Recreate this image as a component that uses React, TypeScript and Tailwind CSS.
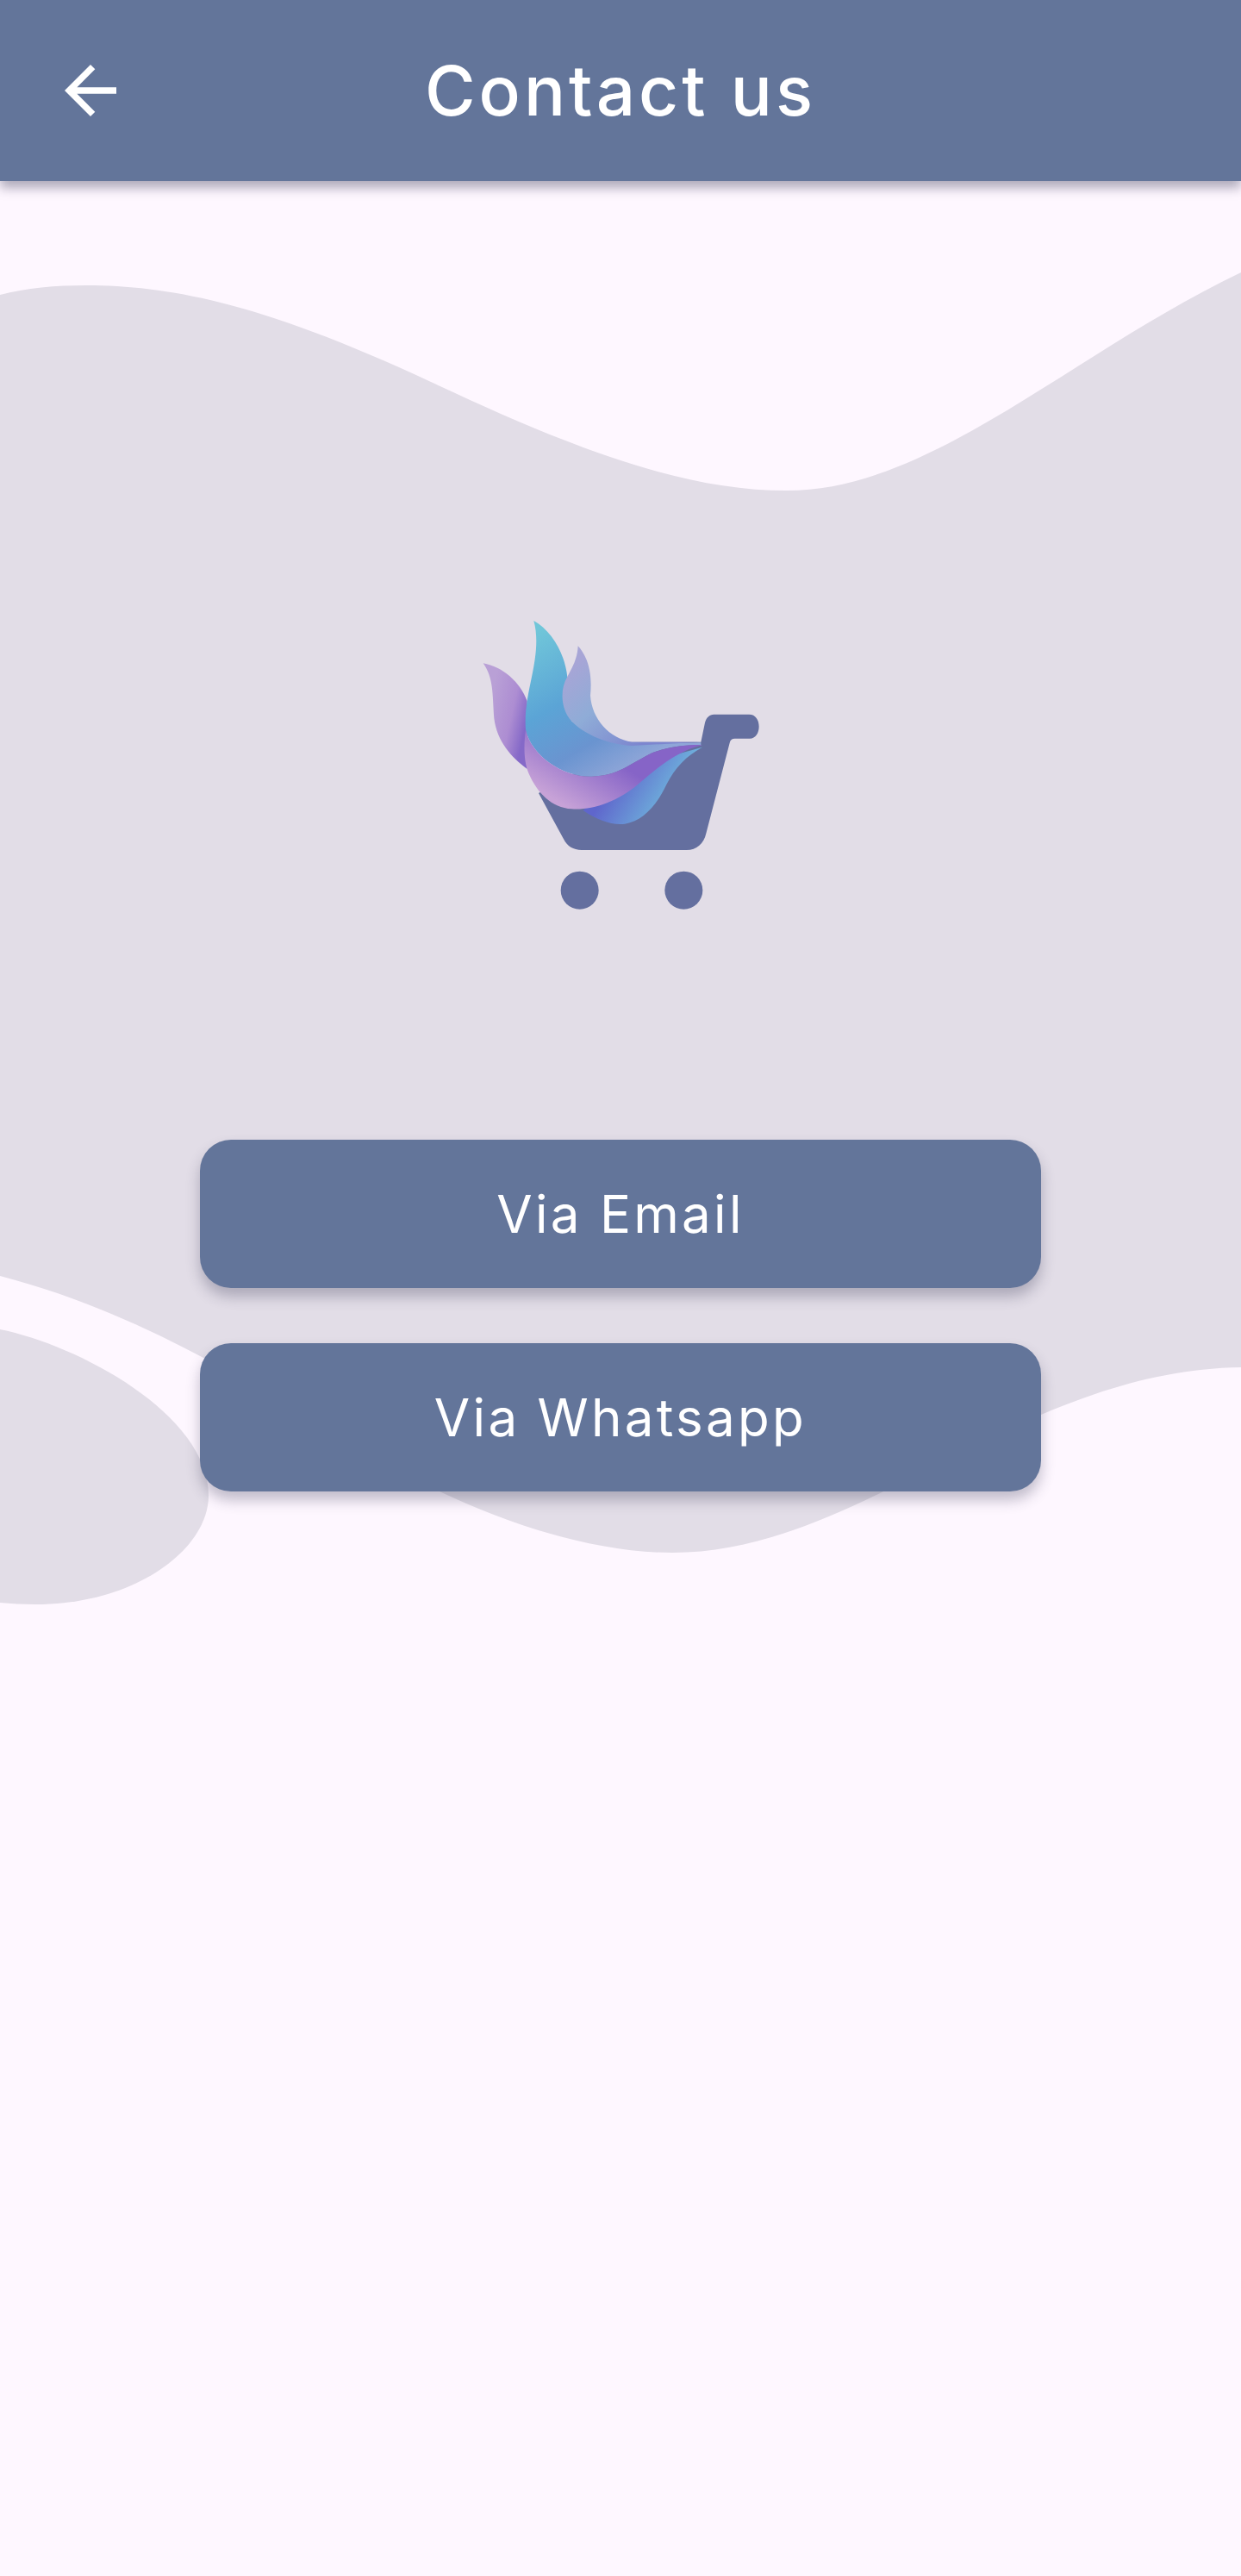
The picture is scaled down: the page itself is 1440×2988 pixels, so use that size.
function Waves() {
  return (
    <svg
      className="absolute left-0 top-0 h-[2988px] w-[1440px]"
      viewBox="0 0 1440 2988"
      fill="#e2dde7"
    >
      <path d="M0 342 C30 334 65 331 100 331 C200 331 310 354 500 443 C660 518 790 569 913 569 C1080 569 1240 412 1440 316 L1440 1586 C1180 1590 1000 1801 780 1801 C690 1801 590 1768 510 1730 C430 1692 320 1620 240 1577 C165 1537 85 1502 0 1480 Z" />
      <path d="M0 1542 C90 1560 242 1640 242 1735 C242 1795 160 1861 41 1861 C27 1861 13 1860 0 1859 Z" />
    </svg>
  );
}

function Logo() {
  return (
    <svg className="h-[380px] w-[380px]" viewBox="0 0 1140 1140">
      <defs>
        <linearGradient id="petal" gradientUnits="userSpaceOnUse" x1="110" y1="400" x2="245" y2="430">
          <stop offset="0" stopColor="#b9a0d6" />
          <stop offset="0.6" stopColor="#ad8dd2" />
          <stop offset="1" stopColor="#8569c8" />
        </linearGradient>
        <linearGradient id="main" gradientUnits="userSpaceOnUse" x1="270" y1="130" x2="560" y2="630">
          <stop offset="0" stopColor="#70c6d9" />
          <stop offset="0.45" stopColor="#5ba4d6" />
          <stop offset="0.75" stopColor="#6a94d0" />
          <stop offset="1" stopColor="#8fa6d8" />
        </linearGradient>
        <linearGradient id="back" gradientUnits="userSpaceOnUse" x1="400" y1="250" x2="640" y2="520">
          <stop offset="0" stopColor="#a7a5d6" />
          <stop offset="0.45" stopColor="#8facd7" />
          <stop offset="1" stopColor="#7c86cf" />
        </linearGradient>
        <linearGradient id="purple" gradientUnits="userSpaceOnUse" x1="400" y1="750" x2="520" y2="560">
          <stop offset="0" stopColor="#c7a2d7" />
          <stop offset="1" stopColor="#8664c7" />
        </linearGradient>
        <linearGradient id="low" gradientUnits="userSpaceOnUse" x1="520" y1="690" x2="680" y2="790">
          <stop offset="0" stopColor="#5f66cc" />
          <stop offset="1" stopColor="#6eaedb" />
        </linearGradient>
      </defs>
      <path
        fill="#646f9f"
        d="M285 690 L372 850 C385 875 405 888 435 888 L800 888 C835 888 860 865 868 830 L950 515 C952 505 958 500 968 500 L1020 500 C1040 500 1052 480 1052 458 C1052 435 1040 416 1018 416 L895 416 C880 416 868 428 864 445 L850 512 L600 512 Z"
      />
      <circle cx="428" cy="1028" r="66" fill="#646f9f" />
      <circle cx="790" cy="1028" r="66" fill="#646f9f" />
      <path
        fill="url(#petal)"
        d="M92 238 C160 250 222 305 245 370 L245 606 C190 565 140 510 130 430 C124 340 128 290 92 238 Z"
      />
      <path
        fill="url(#low)"
        d="M440 750 C490 785 540 802 585 797 C650 788 700 725 730 660 C760 600 800 560 855 530 L600 600 Z"
      />
      <path
        fill="url(#main)"
        d="M268 90 C330 125 375 200 385 285 L400 440 L610 518 L850 514 L850 525 C800 520 730 530 680 550 C600 590 560 630 470 632 C370 635 260 560 240 470 C235 400 250 340 260 290 C275 220 285 150 268 90 Z"
      />
      <path
        fill="url(#back)"
        d="M422 178 C460 220 472 280 465 350 C470 430 530 500 610 512 L850 512 L610 525 C530 520 450 490 400 440 C362 400 358 330 385 285 C400 255 420 225 422 178 Z"
      />
      <path
        fill="url(#purple)"
        d="M240 470 C260 560 370 635 470 632 C560 630 600 590 680 550 C730 530 800 520 855 522 C760 545 690 610 630 660 C560 720 470 750 400 745 C330 740 280 690 250 620 C230 570 235 510 240 470 Z"
      />
    </svg>
  );
}

function ContactButton({ label }: { label: string }) {
  return (
    <button
      type="button"
      className="flex h-[172px] w-[976px] items-center justify-center rounded-[36px] bg-[#63759a] text-[60px] tracking-[3.3px] text-white shadow-[0_10px_16px_rgba(50,50,80,0.3)]"
    >
      {label}
    </button>
  );
}

export default function App() {
  return (
    <div className="relative h-[2988px] w-full overflow-hidden bg-[#fef7ff] font-['Inter',sans-serif]">
      <Waves />

      <header className="relative flex h-[210px] items-center bg-[#63759a] px-[60px] text-white shadow-[0_8px_12px_rgba(30,30,60,0.35)]">
        <svg className="h-[90px] w-[90px] shrink-0" viewBox="0 0 24 24" fill="currentColor">
          <path d="M20 11H7.83l5.59-5.59L12 4l-8 8 8 8 1.41-1.41L7.83 13H20v-2z" />
        </svg>
        <h1 className="flex-1 text-center text-[80px] font-medium tracking-[4px]">Contact us</h1>
        <div className="w-[90px] shrink-0" />
      </header>

      <main className="relative flex flex-col items-center pt-[480px]">
        <Logo />
        <div className="mt-[252px] flex flex-col gap-[64px]">
          <ContactButton label="Via Email" />
          <ContactButton label="Via Whatsapp" />
        </div>
      </main>
    </div>
  );
}
